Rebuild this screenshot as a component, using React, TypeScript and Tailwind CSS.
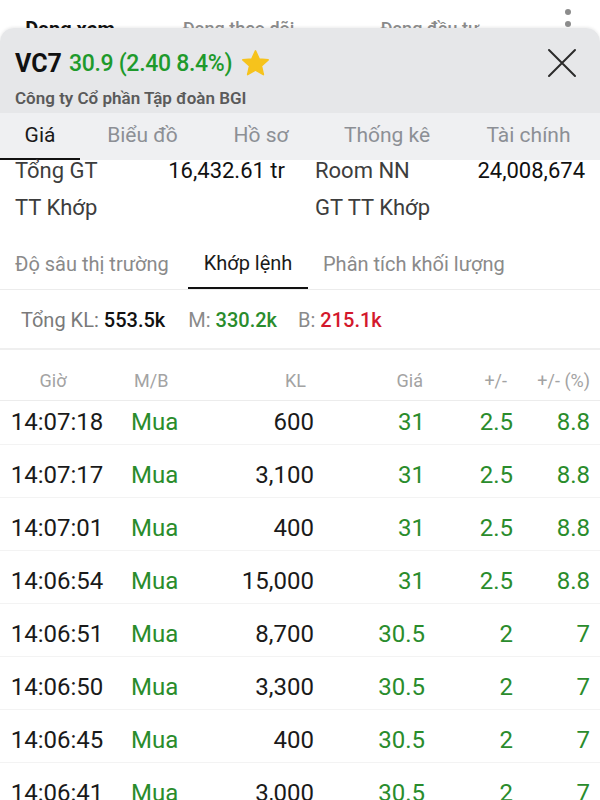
import React from 'react';

type Trade = {
  time: string;
  side: string;
  vol: string;
  price: string;
  change: string;
  pct: string;
};

const trades: Trade[] = [
  { time: '14:07:18', side: 'Mua', vol: '600', price: '31', change: '2.5', pct: '8.8' },
  { time: '14:07:17', side: 'Mua', vol: '3,100', price: '31', change: '2.5', pct: '8.8' },
  { time: '14:07:01', side: 'Mua', vol: '400', price: '31', change: '2.5', pct: '8.8' },
  { time: '14:06:54', side: 'Mua', vol: '15,000', price: '31', change: '2.5', pct: '8.8' },
  { time: '14:06:51', side: 'Mua', vol: '8,700', price: '30.5', change: '2', pct: '7' },
  { time: '14:06:50', side: 'Mua', vol: '3,300', price: '30.5', change: '2', pct: '7' },
  { time: '14:06:45', side: 'Mua', vol: '400', price: '30.5', change: '2', pct: '7' },
  { time: '14:06:41', side: 'Mua', vol: '3,000', price: '30.5', change: '2', pct: '7' },
];

const tabs = ['Giá', 'Biểu đồ', 'Hồ sơ', 'Thống kê', 'Tài chính'];

// cột của bảng khớp lệnh
const cols = 'grid grid-cols-[114px_86px_114px_111px_88px_77px]';

function Star() {
  return (
    <svg width="31" height="31" viewBox="0 0 24 24" className="ml-[8px]">
      <path
        d="M12 2.2l2.9 6.3 6.9.7-5.2 4.6 1.5 6.8L12 17.1l-6.1 3.5 1.5-6.8L2.2 9.2l6.9-.7z"
        fill="#f6c31c"
        stroke="#f6c31c"
        strokeWidth="1.2"
        strokeLinejoin="round"
      />
    </svg>
  );
}

function CloseIcon() {
  return (
    <svg width="30" height="30" viewBox="0 0 30 30">
      <path d="M2 2L28 28M28 2L2 28" stroke="#2b2b2b" strokeWidth="2" strokeLinecap="round" />
    </svg>
  );
}

export default function App() {
  return (
    <div className="h-[800px] w-[600px] overflow-hidden bg-white font-['Roboto','Noto_Sans',sans-serif]">
      {/* thanh danh mục phía sau */}
      <div className="relative flex h-[28px] overflow-hidden pt-[17px] text-[20px] leading-[24px]">
        <span className="ml-[25px] font-bold text-[#111]">Đang xem</span>
        <span className="ml-[68px] text-[18px] font-medium text-[#8a8a8a]">Đang theo dõi</span>
        <span className="ml-[86px] text-[18px] font-medium text-[#8a8a8a]">Đang đầu tư</span>
        <svg width="10" height="40" viewBox="0 0 10 40" className="absolute left-[563px] top-[0px]">
          <circle cx="5" cy="12" r="3" fill="#8c8c8c" />
          <circle cx="5" cy="24" r="3" fill="#8c8c8c" />
          <circle cx="5" cy="36" r="3" fill="#8c8c8c" />
        </svg>
      </div>

      {/* sheet chi tiết mã */}
      <div className="rounded-t-[14px] bg-white shadow-[0_-1px_3px_rgba(0,0,0,0.08)]">
        <div className="flex h-[85px] items-start justify-between rounded-t-[14px] bg-[#e6e7e9] pl-[15px] pr-[23px] pt-[20px]">
          <div>
            <div className="flex items-center leading-[28px]">
              <span className="text-[25px] font-bold text-[#111]">VC7</span>
              <span className="ml-[7px] text-[23px] font-medium tracking-[-0.3px] text-[#1e9a2c]">
                30.9 (2.40 8.4%)
              </span>
              <Star />
            </div>
            <div className="mt-[9px] text-[17px] font-semibold leading-[20px] text-[#5a5a5a]">
              Công ty Cổ phần Tập đoàn BGI
            </div>
          </div>
          <CloseIcon />
        </div>

        {/* tab chính */}
        <div className="grid h-[47px] grid-cols-[80px_125px_112px_140px_143px] bg-[#eff0f2] text-center text-[21px]">
          {tabs.map((t, i) => (
            <div
              key={t}
              className={`flex items-center justify-center border-b-2 ${
                i === 0 ? 'border-[#111] text-[#1a1a1a]' : 'border-transparent text-[#8c8f95]'
              }`}
            >
              {t}
            </div>
          ))}
        </div>

        {/* thông tin giao dịch */}
        <div className="grid grid-cols-2 gap-[30px] px-[15px] text-[22px] leading-[22px]">
          <div className="flex flex-col">
            <div className="flex justify-between">
              <span className="text-[#3d3d3d]">Tổng GT</span>
              <span className="text-[#111]">16,432.61 tr</span>
            </div>
            <div className="mt-[15px] text-[#3d3d3d]">TT Khớp</div>
          </div>
          <div className="flex flex-col">
            <div className="flex justify-between">
              <span className="text-[#3d3d3d]">Room NN</span>
              <span className="text-[#111]">24,008,674</span>
            </div>
            <div className="mt-[15px] text-[#3d3d3d]">GT TT Khớp</div>
          </div>
        </div>

        {/* tab phụ */}
        <div className="mt-[19px] flex h-[52px] border-b border-[#ececec] text-[20px]">
          <div className="flex w-[188px] items-center pl-[15px] text-[#8a8a8a]">Độ sâu thị trường</div>
          <div className="flex w-[120px] items-center justify-center border-b-2 border-[#111] text-[#1a1a1a]">
            Khớp lệnh
          </div>
          <div className="flex items-center pl-[15px] text-[#8a8a8a]">Phân tích khối lượng</div>
        </div>

        {/* tổng khối lượng */}
        <div className="flex h-[60px] items-center border-b-2 border-[#efefef] pl-[21px] pt-[2px] text-[20px]">
          <span className="text-[#7a7a7a]">Tổng KL:</span>
          <span className="ml-[5px] font-medium text-[#111]">553.5k</span>
          <span className="ml-[23px] text-[#8a8a8a]">M:</span>
          <span className="ml-[5px] font-medium text-[#2a8c2c]">330.2k</span>
          <span className="ml-[21px] text-[#8a8a8a]">B:</span>
          <span className="ml-[5px] font-medium text-[#d3182c]">215.1k</span>
        </div>

        {/* tiêu đề bảng */}
        <div className={`${cols} h-[51px] items-center border-b border-[#ececec] pt-[11px] text-[18px] text-[#a3a3a3]`}>
          <span className="pr-[8px] text-center">Giờ</span>
          <span className="pl-[20px]">M/B</span>
          <span className="pr-[8px] text-right">KL</span>
          <span className="pr-[2px] text-right">Giá</span>
          <span className="pr-[6px] text-right">+/-</span>
          <span className="text-right">+/- (%)</span>
        </div>

        {/* danh sách khớp lệnh, đã cuộn xuống một chút */}
        <div className="-mt-[9px]">
          {trades.map((t, i) => (
            <div key={i} className={`${cols} h-[53px] items-center border-b border-[#f3f3f3] pt-[7px] text-[24px]`}>
              <span className="text-center text-[#1a1a1a]">{t.time}</span>
              <span className="pl-[17px] text-[#2a8c2c]">{t.side}</span>
              <span className="text-right text-[#1a1a1a]">{t.vol}</span>
              <span className="text-right text-[#2a8c2c]">{t.price}</span>
              <span className="text-right text-[#2a8c2c]">{t.change}</span>
              <span className="text-right text-[#2a8c2c]">{t.pct}</span>
            </div>
          ))}
        </div>
      </div>
    </div>
  );
}
